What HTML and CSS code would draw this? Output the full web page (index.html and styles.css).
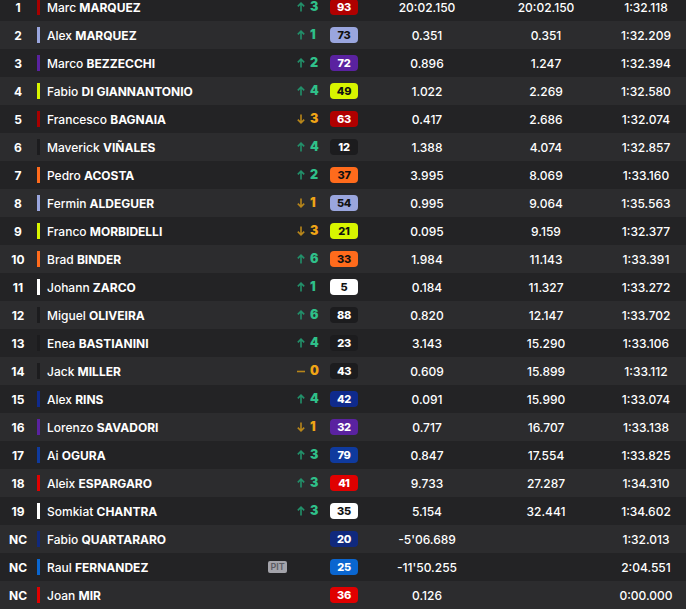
FILE: index.html
```html
<!DOCTYPE html>
<html>
<head>
<meta charset="utf-8">
<link rel="stylesheet" href="styles.css">
</head>
<body>
<div class="table" id="t"></div>
<script>
const up='<svg class="ar" width="8" height="10" viewBox="0 0 8 10"><path d="M4 9.5V1.2M0.8 4.4L4 1.2L7.2 4.4" fill="none" stroke="currentColor" stroke-width="1.6"/></svg>';
const dn='<svg class="ar" width="8" height="10" viewBox="0 0 8 10"><path d="M4 0.5V8.8M0.8 5.6L4 8.8L7.2 5.6" fill="none" stroke="currentColor" stroke-width="1.6"/></svg>';
const eq='<svg class="ar" width="8" height="10" viewBox="0 0 8 10"><path d="M0 5.5H8" fill="none" stroke="currentColor" stroke-width="1.6"/></svg>';
const rows=[
["1","Marc","MARQUEZ","#a80000","u","3","93","#b00000","#fff","20:02.150","20:02.150","1:32.118"],
["2","Alex","MARQUEZ","#9aa6de","u","1","73","#9aa6de","#111","0.351","0.351","1:32.209"],
["3","Marco","BEZZECCHI","#5a22a0","u","2","72","#5a22a0","#fff","0.896","1.247","1:32.394"],
["4","Fabio","DI GIANNANTONIO","#d8f500","u","4","49","#d8f500","#111","1.022","2.269","1:32.580"],
["5","Francesco","BAGNAIA","#a80000","d","3","63","#b00000","#fff","0.417","2.686","1:32.074"],
["6","Maverick","VIÑALES","#1c1c1e","u","4","12","#1c1c1e","#fff","1.388","4.074","1:32.857"],
["7","Pedro","ACOSTA","#ff6b1c","u","2","37","#ff6b1c","#111","3.995","8.069","1:33.160"],
["8","Fermin","ALDEGUER","#9aa6de","d","1","54","#9aa6de","#111","0.995","9.064","1:35.563"],
["9","Franco","MORBIDELLI","#d8f500","d","3","21","#d8f500","#111","0.095","9.159","1:32.377"],
["10","Brad","BINDER","#ff6b1c","u","6","33","#ff6b1c","#111","1.984","11.143","1:33.391"],
["11","Johann","ZARCO","#ffffff","u","1","5","#ffffff","#111","0.184","11.327","1:33.272"],
["12","Miguel","OLIVEIRA","#1c1c1e","u","6","88","#1c1c1e","#fff","0.820","12.147","1:33.702"],
["13","Enea","BASTIANINI","#1c1c1e","u","4","23","#1c1c1e","#fff","3.143","15.290","1:33.106"],
["14","Jack","MILLER","#1c1c1e","e","0","43","#1c1c1e","#fff","0.609","15.899","1:33.112"],
["15","Alex","RINS","#0f2a8c","u","4","42","#0f2a8c","#fff","0.091","15.990","1:33.074"],
["16","Lorenzo","SAVADORI","#5a22a0","d","1","32","#5a22a0","#fff","0.717","16.707","1:33.138"],
["17","Ai","OGURA","#0f3a9e","u","3","79","#0f3a9e","#fff","0.847","17.554","1:33.825"],
["18","Aleix","ESPARGARO","#e00000","u","3","41","#e00000","#fff","9.733","27.287","1:34.310"],
["19","Somkiat","CHANTRA","#ffffff","u","3","35","#ffffff","#111","5.154","32.441","1:34.602"],
["NC","Fabio","QUARTARARO","#10297d","","","20","#10297d","#fff","-5'06.689","","1:32.013"],
["NC","Raul","FERNANDEZ","#0a66d0","","","25","#0a66d0","#fff","-11'50.255","","2:04.551",1],
["NC","Joan","MIR","#e00000","","","36","#e00000","#fff","0.126","","0:00.000"]
];
const t=document.getElementById('t');
rows.forEach(r=>{
  const d=document.createElement('div');d.className='row';
  let ch='';
  if(r[4]==='u')ch='<span class="chg up">'+up+'<b>'+r[5]+'</b></span>';
  if(r[4]==='d')ch='<span class="chg dn">'+dn+'<b>'+r[5]+'</b></span>';
  if(r[4]==='e')ch='<span class="chg dn">'+eq+'<b>'+r[5]+'</b></span>';
  d.innerHTML='<div class="pos">'+r[0]+'</div>'+
  '<div class="rider"><span class="bar" style="background:'+r[3]+'"></span><span class="nm">'+r[1]+' <b>'+r[2]+'</b></span></div>'+
  '<div class="pit">'+(r[12]?'<span class="pitb">PIT</span>':'')+'</div>'+
  '<div class="change">'+ch+'</div>'+
  '<div class="num"><span class="badge" style="background:'+r[7]+';color:'+r[8]+'">'+r[6]+'</span></div>'+
  '<div class="time">'+r[9]+'</div><div class="time">'+r[10]+'</div><div class="time lap">'+r[11]+'</div>';
  t.appendChild(d);
});
</script>
</body>
</html>
```
FILE: styles.css
```css
html,body{margin:0;padding:0;background:#232325;overflow:hidden;}
body{font-family:Inter,"Noto Sans",sans-serif;color:#fff;font-size:12px;}
.table{margin-top:-7px;}
.row{display:grid;grid-template-columns:36px 228px 27px 35px 36px 130px 108px 86px;height:28px;align-items:center;}
.row:nth-child(odd){background:#232325;}
.row:nth-child(even){background:#2c2c2e;}
.pos{text-align:center;font-weight:700;}
.rider{display:flex;align-items:center;}
.bar{width:3px;height:16px;margin-left:1px;margin-right:7px;}
.nm{font-weight:500;white-space:nowrap;}
.nm b{font-weight:700;}
.pit{display:flex;justify-content:center;}
.pitb{background:#a3a3aa;color:#5a5a62;font-size:9px;font-weight:600;line-height:12px;padding:0 2px;border-radius:2px;}
.change{padding-left:6px;}
.chg{display:inline-flex;align-items:center;gap:5px;font-size:12.5px;font-weight:700;}
.chg.up{color:#2fc08a;}
.chg.up .ar{color:#22906a;}
.chg.dn{color:#f0a516;}
.chg.dn .ar{color:#b8861a;}
.num{display:flex;justify-content:center;}
.badge{width:28px;height:16px;border-radius:4px;display:flex;align-items:center;justify-content:center;font-size:11px;font-weight:800;letter-spacing:-0.3px;}
.time{text-align:center;font-weight:500;}
.lap{padding-left:6px;}
```
